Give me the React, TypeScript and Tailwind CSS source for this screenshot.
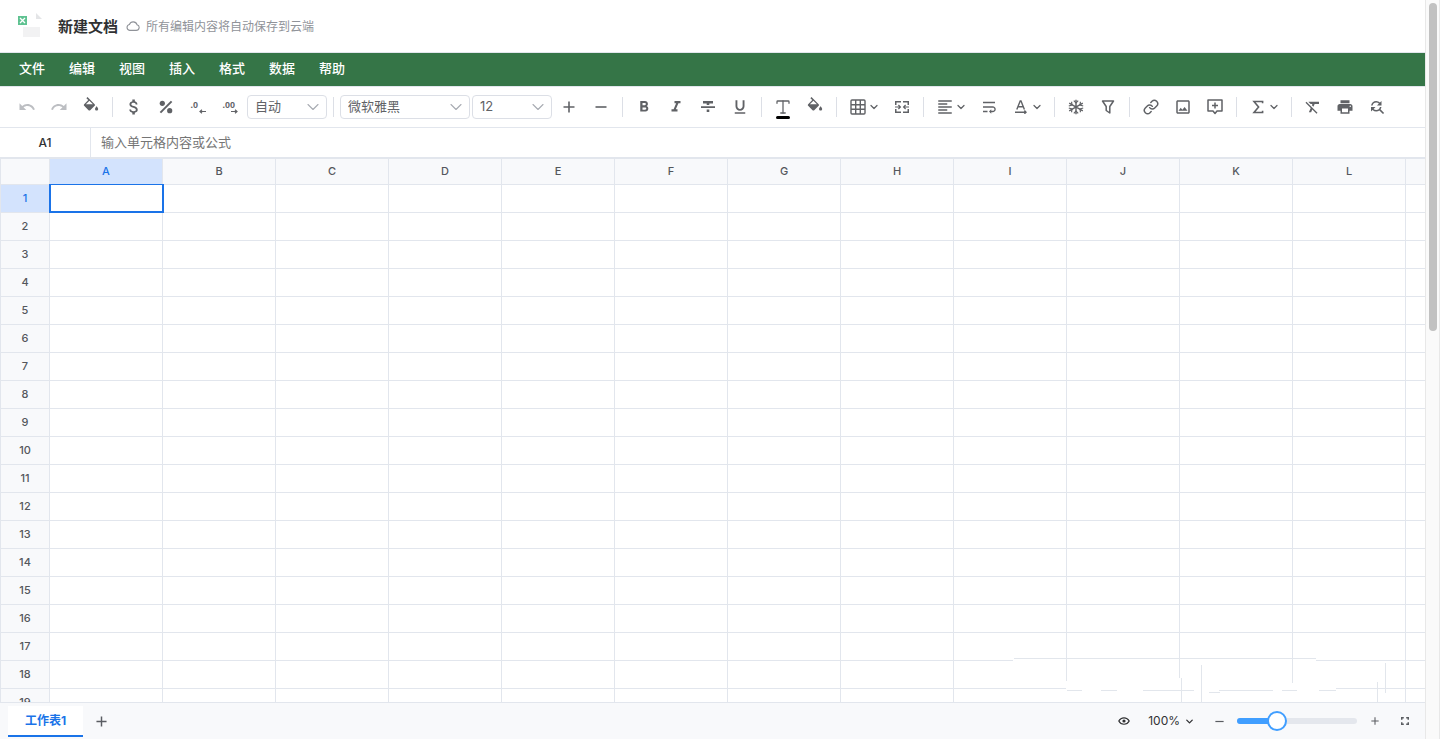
import type { ReactNode } from "react";
import {
  MdAttachMoney, MdFindReplace, MdFormatAlignLeft, MdFormatBold, MdFormatClear,
  MdFormatItalic, MdFormatUnderlined, MdPrint, MdRedo, MdUndo, MdWrapText, MdOutlineImage,
} from "react-icons/md";
import { ChevronDown, Link, Type } from "lucide-react";

const MENUS = ["文件", "编辑", "视图", "插入", "格式", "数据", "帮助"];
const COLUMNS = ["A", "B", "C", "D", "E", "F", "G", "H", "I", "J", "K", "L"];
const ROWS = Array.from({ length: 19 }, (_, i) => i + 1);

function Tool({ label, children, disabled }: { label: string; children: ReactNode; disabled?: boolean }) {
  return (
    <button
      type="button"
      aria-label={label}
      disabled={disabled}
      className="relative mx-0.5 flex size-7 shrink-0 items-center justify-center rounded text-[#606266] enabled:hover:bg-gray-100 disabled:text-[#bcbec2]"
    >
      {children}
    </button>
  );
}

function DropTool({ label, children }: { label: string; children: ReactNode }) {
  return (
    <button type="button" aria-label={label} className="mx-0.5 flex h-7 w-10 shrink-0 items-center rounded text-[#606266] hover:bg-gray-100">
      <span className="flex w-7 shrink-0 justify-center">{children}</span>
      <ChevronDown size={12} strokeWidth={2.5} className="-ml-1 shrink-0" />
    </button>
  );
}

function Divider() {
  return <span className="mx-[5px] h-5 w-px shrink-0 bg-[#dcdfe6]" />;
}

function Picker({ label, value, width }: { label: string; value: string; width: string }) {
  return (
    <span className={`relative mx-px flex h-6 shrink-0 ${width}`}>
      <select
        aria-label={label}
        defaultValue={value}
        className="h-6 w-full appearance-none rounded border border-[#dcdfe6] bg-white pb-0.5 pl-[7px] text-[13px] leading-5 text-[#606266]"
      >
        <option>{value}</option>
      </select>
      <ChevronDown size={20} strokeWidth={1.3} className="pointer-events-none absolute top-0.5 right-1 text-[#a8abb2]" />
    </span>
  );
}

function BucketIcon() {
  return (
    <svg width="16" height="16" viewBox="2 0 20 20" fill="currentColor" className="mb-1">
      <path d="M16.56 8.94L7.62 0 6.21 1.41l2.38 2.38-5.15 5.15c-.59.59-.59 1.54 0 2.12l5.5 5.5c.29.29.68.44 1.06.44s.77-.15 1.06-.44l5.5-5.5c.59-.58.59-1.53 0-2.12zM5.6 9.2L10 4.8 14.4 9.2zM19 11.5s-2 2.17-2 3.5c0 1.1.9 2 2 2s2-.9 2-2c0-1.33-2-3.5-2-3.5z" />
    </svg>
  );
}

function Percent() {
  return (
    <svg width="14" height="14" viewBox="0 0 14 14" fill="currentColor">
      <circle cx="3.3" cy="3.3" r="2.6" />
      <circle cx="10.7" cy="10.7" r="2.6" />
      <path d="M1.4 12.6L12.6 1.4" stroke="currentColor" strokeWidth="2" />
    </svg>
  );
}

function Decimal({ digits, increase }: { digits: string; increase?: boolean }) {
  return (
    <span className="flex w-[15px] flex-col items-start font-['Liberation_Sans',sans-serif]">
      <span className="text-[9px] leading-2 font-bold">{digits}</span>
      <svg width="7" height="5" viewBox="0 0 7 5" className="self-end" fill="none" stroke="currentColor" strokeWidth="1.2">
        {increase ? <path d="M0 2.5H6M4 .7L6 2.5L4 4.3" /> : <path d="M7 2.5H1M3 .7L1 2.5L3 4.3" />}
      </svg>
    </span>
  );
}

function Strike() {
  return (
    <svg width="14" height="14" viewBox="0 0 14 14" fill="currentColor">
      <path d="M2 1h10v2.6H8.3V5H5.7V3.6H2zM0 6.2h14v1.7H0zM5.7 9.6h2.6V12H5.7z" />
    </svg>
  );
}

function GridIcon() {
  return (
    <svg width="16" height="16" viewBox="0 0 16 16" fill="none" stroke="currentColor" strokeWidth="1.4">
      <rect x="1" y="1" width="14" height="14" rx="1" />
      <path d="M5.7 1v14M10.3 1v14M1 5.7h14M1 10.3h14" />
    </svg>
  );
}

function MergeIcon() {
  return (
    <svg width="14" height="14" viewBox="0 0 14 14" fill="none" stroke="currentColor" strokeWidth="1.5">
      <path d="M6 1.75H.75V5M8 1.75H13.25V5M6 12.25H.75V9M8 12.25H13.25V9" />
      <path d="M0 7h5M14 7H9M3.4 5L5.4 7L3.4 9M10.6 5L8.6 7L10.6 9" strokeWidth="1.2" />
    </svg>
  );
}

function RotateIcon() {
  return (
    <svg width="14" height="14" viewBox="0 0 14 14" fill="none" stroke="currentColor" strokeWidth="1.4">
      <path d="M2.8 9.4L6.2 1H7L10.4 9.4M4 6.8h5.2" />
      <path d="M1 12.2H12M10.4 10.6L12 12.2L10.4 13.8" />
    </svg>
  );
}

function SnowIcon() {
  return (
    <svg width="16" height="16" viewBox="0 0 16 16" fill="none" stroke="currentColor" strokeWidth="1.4">
      <path d="M8 .8V15.2M1.2 4.2L14.8 11.8M14.8 4.2L1.2 11.8" />
      <path d="M5.8 1.6L8 3.8L10.2 1.6M5.8 14.4L8 12.2L10.2 14.4M.8 7L3.9 6L3.6 2.8M15.2 7L12.1 6L12.4 2.8M.8 9L3.9 10L3.6 13.2M15.2 9L12.1 10L12.4 13.2" strokeWidth="1.2" />
    </svg>
  );
}

function FunnelIcon() {
  return (
    <svg width="14" height="14" viewBox="0 0 14 14" fill="none" stroke="currentColor" strokeWidth="1.5" strokeLinejoin="round">
      <path d="M1.5 1H12.5L8.8 6.5V13L5.2 10.5V6.5Z" />
    </svg>
  );
}

function CommentIcon() {
  return (
    <svg width="16" height="16" viewBox="0 0 16 16" fill="none" stroke="currentColor" strokeWidth="1.5" strokeLinejoin="round">
      <path d="M1 1H15V12H10L8 14.5L6 12H1Z" />
      <path d="M8 3.6v6M5 6.6h6" />
    </svg>
  );
}

function SigmaIcon() {
  return (
    <svg width="12" height="14" viewBox="0 0 12 14" fill="none" stroke="currentColor" strokeWidth="1.6">
      <path d="M10.6 3.2V1.5H2L6.6 7L2 12.5H10.6V10.8" />
    </svg>
  );
}

function CloudIcon() {
  return (
    <svg width="14" height="12" viewBox="0 0 14 12" fill="none" stroke="currentColor" strokeWidth="1.1" className="ml-2 text-[#909399]">
      <path d="M3.6 10.4H10.2A2.9 2.9 0 0 0 11 4.7A4 4 0 0 0 3.4 4.5A3 3 0 0 0 3.6 10.4Z" />
    </svg>
  );
}

function Plus({ size }: { size: number }) {
  return (
    <svg width={size} height={size} viewBox="0 0 12 12" stroke="currentColor" strokeWidth="1.6">
      <path d="M.5 6h11M6 .5v11" />
    </svg>
  );
}

function Minus({ size }: { size: number }) {
  return (
    <svg width={size} height={size} viewBox="0 0 12 12" stroke="currentColor" strokeWidth="1.6">
      <path d="M.5 6h11" />
    </svg>
  );
}

function EyeIcon() {
  return (
    <svg width="12" height="12" viewBox="0 0 12 12" fill="none" stroke="currentColor" strokeWidth="1.2">
      <path d="M.8 6C3 1.7 9 1.7 11.2 6C9 10.3 3 10.3 .8 6Z" />
      <circle cx="6" cy="6" r="1.6" fill="currentColor" stroke="none" />
    </svg>
  );
}

function FullscreenIcon() {
  return (
    <svg width="8" height="8" viewBox="0 0 8 8" fill="none" stroke="currentColor" strokeWidth="1.5">
      <path d="M.75 2.8V.75H2.8M5.2 .75H7.25V2.8M7.25 5.2V7.25H5.2M2.8 7.25H.75V5.2" />
    </svg>
  );
}

function Logo() {
  return (
    <svg width="26" height="26" viewBox="0 0 26 26" className="shrink-0">
      <path d="M6 14h17v10H6z" fill="#f2f2f3" />
      <path d="M19 0L25 6H19Z" fill="#e4e5e7" />
      <rect x="1" y="3" width="9" height="9" fill="#5fc291" />
      <path d="M3 5L8 10M8 5L3 10" stroke="#fff" strokeWidth="1.3" />
    </svg>
  );
}

function FadedRegion() {
  return (
    <svg width="412" height="45" viewBox="0 0 412 45" aria-hidden="true" className="pointer-events-none absolute right-0 bottom-0">
      <path d="M0 2H303V5H323V45H53V5H0Z" fill="#fff" />
      <g stroke="#e2e6ec" fill="none">
        <path d="M1 1.5H303M54 33.5H69M88 33.5H104M130 33.5H181M206 33.5H260M269 33.5H284M306 33.5H323M196 35.5H207" />
        <path d="M53.5 2V24M166.5 2V21M279.5 2V26M168.5 21V45M188.5 8V45M364.5 25V45M372.5 6V36" />
      </g>
    </svg>
  );
}

export default function App() {
  return (
    <div className="flex h-screen bg-white font-['Inter','Noto_Sans_CJK_SC',sans-serif] text-[#303133]">
      <div className="flex min-w-0 flex-1 flex-col overflow-hidden">
        <header className="flex h-[53px] shrink-0 items-center border-b border-[#e2e6ed] pl-[17px]">
          <Logo />
          <h1 className="mt-0.5 ml-[15px] text-[15px] leading-6 font-bold">新建文档</h1>
          <CloudIcon />
          <p className="mt-0.5 ml-1.5 text-xs leading-5 text-[#909399]">所有编辑内容将自动保存到云端</p>
        </header>

        <nav className="flex h-[33px] shrink-0 items-center bg-[#357547] pb-1 pl-[7px]">
          {MENUS.map((m) => (
            <button key={m} type="button" className="px-3 text-[13px] leading-6 font-medium text-white">
              {m}
            </button>
          ))}
        </nav>

        <div role="toolbar" aria-label="工具栏" className="flex h-[42px] shrink-0 items-center overflow-hidden border-y border-[#e2e6ed] pl-[11px]">
          <Tool label="撤销" disabled><MdUndo size={18} /></Tool>
          <Tool label="重做" disabled><MdRedo size={18} /></Tool>
          <Tool label="格式刷"><BucketIcon /></Tool>
          <Divider />
          <Tool label="货币"><MdAttachMoney size={20} /></Tool>
          <Tool label="百分比"><Percent /></Tool>
          <Tool label="减少小数位"><Decimal digits=".0" /></Tool>
          <Tool label="增加小数位"><Decimal digits=".00" increase /></Tool>
          <Picker label="数字格式" value="自动" width="w-20" />
          <Divider />
          <Picker label="字体" value="微软雅黑" width="w-[130px]" />
          <Picker label="字号" value="12" width="w-20" />
          <Tool label="增大字号"><Plus size={12} /></Tool>
          <Tool label="减小字号"><Minus size={12} /></Tool>
          <Divider />
          <Tool label="加粗"><MdFormatBold size={18} /></Tool>
          <Tool label="斜体"><MdFormatItalic size={18} /></Tool>
          <Tool label="删除线"><Strike /></Tool>
          <Tool label="下划线"><MdFormatUnderlined size={18} /></Tool>
          <Divider />
          <Tool label="文字颜色">
            <Type size={18} strokeWidth={1.7} />
            <span className="absolute bottom-0.5 h-[3px] w-3.5 rounded-xs bg-black" />
          </Tool>
          <Tool label="填充颜色"><BucketIcon /></Tool>
          <Divider />
          <DropTool label="边框"><GridIcon /></DropTool>
          <Tool label="合并单元格"><MergeIcon /></Tool>
          <Divider />
          <DropTool label="对齐"><MdFormatAlignLeft size={18} /></DropTool>
          <Tool label="自动换行"><MdWrapText size={18} /></Tool>
          <DropTool label="文字方向"><RotateIcon /></DropTool>
          <Divider />
          <Tool label="冻结"><SnowIcon /></Tool>
          <Tool label="筛选"><FunnelIcon /></Tool>
          <Divider />
          <Tool label="链接"><Link size={16} strokeWidth={2.2} /></Tool>
          <Tool label="图片"><MdOutlineImage size={18} /></Tool>
          <Tool label="批注"><CommentIcon /></Tool>
          <Divider />
          <DropTool label="函数"><SigmaIcon /></DropTool>
          <Divider />
          <Tool label="清除格式"><MdFormatClear size={18} /></Tool>
          <Tool label="打印"><MdPrint size={18} /></Tool>
          <Tool label="查找替换"><MdFindReplace size={18} /></Tool>
        </div>

        <div className="flex h-[31px] shrink-0 border-b-2 border-[#e2e6ed]">
          <div className="flex w-[91px] shrink-0 items-center justify-center border-r border-[#e2e6ed] text-xs font-medium">A1</div>
          <input
            aria-label="编辑栏"
            placeholder="输入单元格内容或公式"
            className="min-w-0 flex-1 px-2.5 text-[13px] outline-none placeholder:text-[#757575]"
          />
        </div>

        <main className="relative min-h-0 flex-1 overflow-hidden">
          <table className="w-full table-fixed border-separate border-spacing-0 text-center text-[11px] text-[#54575c]">
            <colgroup>
              <col className="w-[50px]" />
              {COLUMNS.map((c) => <col key={c} className="w-[113px]" />)}
              <col />
            </colgroup>
            <thead>
              <tr className="h-[26px]">
                <th aria-label="全选" className="border-r border-b border-l border-[#e2e6ed] bg-[#f8f9fb] p-0" />
                {COLUMNS.map((c, i) => (
                  <th
                    key={c}
                    scope="col"
                    className={`border-r border-b border-[#e2e6ed] p-0 font-medium ${i === 0 ? "bg-[#d3e3fd] text-[#1a73e8]" : "bg-[#f8f9fb]"}`}
                  >
                    {c}
                  </th>
                ))}
                <td className="border-b border-[#e2e6ed] bg-[#f8f9fb] p-0" />
              </tr>
            </thead>
            <tbody>
              {ROWS.map((r) => (
                <tr key={r} className="h-7">
                  <th
                    scope="row"
                    className={`border-r border-b border-l border-[#e2e6ed] p-0 font-medium ${r === 1 ? "bg-[#d3e3fd] text-[#1a73e8]" : "bg-[#f8f9fb]"}`}
                  >
                    {r}
                  </th>
                  {COLUMNS.map((c, i) => (
                    <td key={c} className="relative border-r border-b border-[#e2e6ed] p-0">
                      {r === 1 && i === 0 && <span className="absolute -inset-px -right-0.5 z-10 border-2 border-t border-[#1a73e8]" />}
                    </td>
                  ))}
                  <td className="border-b border-[#e2e6ed] p-0" />
                </tr>
              ))}
            </tbody>
          </table>
          <FadedRegion />
        </main>

        <footer className="flex h-[37px] shrink-0 items-center border-t border-[#e2e6ed] bg-[#f8f9fb] pl-2 text-[#5a5d62]">
          <button type="button" className="mt-[3px] h-[31px] w-[75px] self-start border-b-2 border-[#1a73e8] bg-white text-xs font-bold text-[#1a73e8]">工作表1</button>
          <button type="button" aria-label="新建工作表" className="ml-1.5 flex size-6 items-center justify-center"><Plus size={11} /></button>
          <div className="ml-auto flex items-center pr-2">
            <button type="button" aria-label="护眼模式" className="flex size-6 items-center justify-center text-[#303133]"><EyeIcon /></button>
            <button type="button" className="ml-3 flex items-center gap-1 text-xs leading-6 text-[#303133]">
              100% <ChevronDown size={11} strokeWidth={2.8} />
            </button>
            <button type="button" aria-label="缩小" className="ml-3 flex size-6 items-center justify-center"><Minus size={9} /></button>
            <label className="relative mx-1.5 flex h-5 w-[120px] items-center">
              <span className="flex h-1.5 w-full overflow-hidden rounded-full bg-[#e4e7ed]">
                <span className="w-1/3 bg-[#409eff]" />
              </span>
              <span className="absolute left-1/3 size-5 -translate-x-1/2 rounded-full border-2 border-[#409eff] bg-white" />
              <input type="range" aria-label="缩放" min={0} max={300} defaultValue={100} className="absolute inset-0 opacity-0" />
            </label>
            <button type="button" aria-label="放大" className="flex size-6 items-center justify-center"><Plus size={8} /></button>
            <button type="button" aria-label="全屏" className="ml-1.5 flex size-6 items-center justify-center"><FullscreenIcon /></button>
          </div>
        </footer>
      </div>

      <div className="flex w-[15px] shrink-0 justify-center border-x border-[#e8e8e8] bg-[#fafafa] pt-[3px]">
        <span className="h-[328px] w-2 rounded-full bg-[#c1c1c1]" />
      </div>
    </div>
  );
}
